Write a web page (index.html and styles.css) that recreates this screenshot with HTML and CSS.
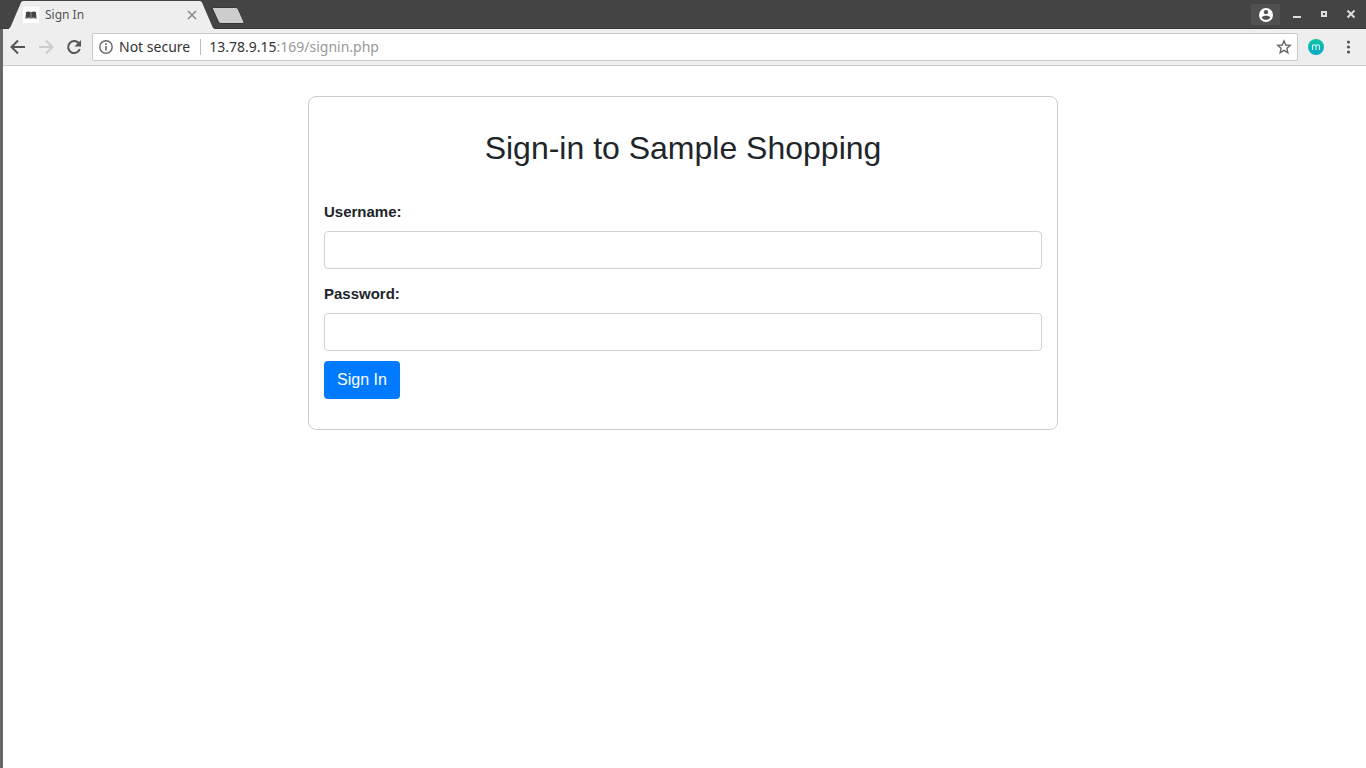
FILE: index.html
```html
<!DOCTYPE html>
<html lang="en">
<head>
<meta charset="utf-8">
<title>Sign In</title>
<link rel="stylesheet" href="styles.css">
</head>
<body>
<div class="browser">
  <header class="titlebar">
    <div class="tab">
      <svg class="tab-shape" viewBox="0 0 206 28" aria-hidden="true"><path d="M0 28V27.200Q1 27 1.500 26L12 1.500Q12.700 0 14 0H191Q192.300 0 193 1.500L203.500 26Q204 27.500 206 28Z" fill="#eeeeee"/></svg>
      <svg class="favicon" viewBox="0 0 16 16" aria-hidden="true"><rect width="16" height="16" fill="#fff"/><path d="M3 5Q5.500 4 7.800 5V11Q5.500 10.300 2.500 11.200ZM8.200 5Q10.500 4 13 5L13.500 11.200Q10.500 10.300 8.200 11Z" fill="#444"/><path d="M2 11.500Q5.500 10.800 8 11.500Q10.500 10.800 14 11.500" fill="none" stroke="#aaa"/></svg>
      <span class="tab-title">Sign In</span>
      <button class="icon-button tab-close" aria-label="Close tab"><svg width="10" height="10" viewBox="0 0 10 10"><path d="M1 1L9 9M9 1L1 9" stroke="#8c8c8c" stroke-width="1.600"/></svg></button>
    </div>
    <button class="icon-button new-tab" aria-label="New tab"><svg width="34" height="18" viewBox="0 0 34 18"><path d="M2.500 1.500H24.500Q26.500 1.500 27.200 3L33 16Q33 17.500 32 17.500H10Q8.300 17.500 7.500 16L1.500 3Q1 1.500 2.500 1.500Z" fill="#cdcdcd" stroke="#363636"/></svg></button>
    <div class="window-controls">
      <button class="icon-button profile" aria-label="Profile"><svg width="14" height="14" viewBox="0 0 14 14"><circle cx="7" cy="7" r="7" fill="#fff"/><circle cx="7" cy="4.200" r="2.100" fill="#505050"/><path d="M2.700 9.400C3.500 7.300 10.500 7.300 11.300 9.400C9.500 12.500 4.500 12.500 2.700 9.400Z" fill="#505050"/></svg></button>
      <button class="icon-button control" aria-label="Minimize"><svg width="10" height="10" viewBox="0 0 10 10"><path d="M1 6H9V8H1Z" fill="#ddd"/></svg></button>
      <button class="icon-button control" aria-label="Restore"><svg width="10" height="10" viewBox="0 0 10 10"><path d="M3 2H7V6H3Z" fill="none" stroke="#ddd" stroke-width="2"/></svg></button>
      <button class="icon-button control" aria-label="Close window"><svg width="10" height="10" viewBox="0 0 10 10"><path d="M1.500 .5L8.500 7.500M8.500 .5L1.500 7.500" stroke="#ddd" stroke-width="2"/></svg></button>
    </div>
  </header>
  <div class="window-body">
    <nav class="toolbar" aria-label="Navigation">
      <button class="icon-button" aria-label="Back"><svg width="16" height="16" viewBox="0 0 16 16"><path d="M15 8H2M8 1.500L1.500 8L8 14.500" fill="none" stroke="#555" stroke-width="2"/></svg></button>
      <button class="icon-button" aria-label="Forward" disabled><svg width="16" height="16" viewBox="0 0 16 16"><path d="M1 8H14M8 1.500L14.500 8L8 14.500" fill="none" stroke="#ccc" stroke-width="2"/></svg></button>
      <button class="icon-button" aria-label="Reload"><svg width="16" height="16" viewBox="0 0 16 16"><path d="M12.600 4A6 6 0 1 0 13.800 10" fill="none" stroke="#555" stroke-width="2"/><path d="M15 1V7.500H8.500Z" fill="#555"/></svg></button>
      <div class="address">
        <svg width="14" height="14" viewBox="0 0 14 14" aria-hidden="true"><circle cx="7" cy="7" r="6.200" fill="none" stroke="#666" stroke-width="1.400"/><path d="M6.200 3.300H7.800V4.900H6.200ZM6.200 6.100H7.800V10.600H6.200Z" fill="#666"/></svg>
        <span class="security">Not secure</span>
        <span class="url">13.78.9.15<span class="path">:169/signin.php</span></span>
        <button class="icon-button bookmark" aria-label="Bookmark this page"><svg width="16" height="16" viewBox="0 0 16 16"><path d="M8 1.900L9.800 6L14.200 6.400L10.900 9.300L11.900 13.700L8 11.400L4.100 13.700L5.100 9.300L1.800 6.400L6.200 6Z" fill="none" stroke="#666" stroke-width="1.400"/></svg></button>
      </div>
      <button class="icon-button extension" aria-label="Extension"><svg width="16" height="16" viewBox="0 0 16 16"><defs><linearGradient id="teal" x1="0" y1="0" x2="0" y2="1"><stop stop-color="#0dc39f"/><stop offset="1" stop-color="#08a8cc"/></linearGradient></defs><circle cx="8" cy="8" r="8" fill="url(#teal)"/><path d="M4.500 11V5.800M4.500 7Q5 5.800 6.300 5.800Q8 5.800 8 7.500V11M8 7.500Q8 5.800 9.800 5.800Q11.500 5.800 11.500 7.500V11" fill="none" stroke="#d9f6f5" stroke-width="1.100"/></svg></button>
      <button class="icon-button" aria-label="Menu"><svg width="16" height="16" viewBox="0 0 16 16"><g fill="#555"><circle cx="8.500" cy="3" r="1.600"/><circle cx="8.500" cy="8" r="1.600"/><circle cx="8.500" cy="13" r="1.600"/></g></svg></button>
    </nav>
    <main class="page">
      <form class="card">
        <h1 class="heading">Sign-in to Sample Shopping</h1>
        <div class="field">
          <label class="label" for="username">Username:</label>
          <input class="input" id="username" type="text">
        </div>
        <div class="field">
          <label class="label" for="password">Password:</label>
          <input class="input" id="password" type="password">
        </div>
        <button class="submit" type="button">Sign In</button>
      </form>
    </main>
  </div>
</div>
</body>
</html>
```

FILE: styles.css
```css
* { box-sizing: border-box; }

body {
  margin: 0;
  background: #fff;
}

.browser {
  display: flex;
  flex-direction: column;
  min-height: 100vh;
  font-family: "Noto Sans", sans-serif;
}

.icon-button {
  display: flex;
  align-items: center;
  justify-content: center;
  flex: none;
  padding: 0;
  border: 0;
  background: none;
}

.titlebar {
  display: flex;
  height: 29px;
  padding: 1px 10px 0 9px;
  background: #444;
  box-shadow: inset 0 -1px #3a3637;
}

.tab {
  position: relative;
  display: flex;
  align-items: center;
  width: 206px;
  padding: 0 18px 0 14px;
}

.tab-shape {
  position: absolute;
  inset: 0;
  width: 100%;
  height: 100%;
}

.favicon {
  position: relative;
  width: 16px;
  height: 16px;
}

.tab-title {
  position: relative;
  flex: 1;
  margin-left: 6px;
  font-size: 12px;
  line-height: 16px;
  color: #555;
}

.tab-close { position: relative; }

.new-tab { margin-left: -4px; }

.window-controls {
  display: flex;
  align-items: center;
  gap: 17px;
  height: 27px;
  margin-left: auto;
}

.profile {
  width: 29px;
  height: 21px;
  margin-right: -5px;
  background: #505050;
  border-radius: 1px;
}

.window-body {
  flex: 1;
  border-left: 3px solid #666;
}

.toolbar {
  display: flex;
  align-items: center;
  gap: 12px;
  height: 37px;
  padding: 0 10px 0 7px;
  background: #eee;
  border-bottom: 1px solid #ccc;
}

.address {
  display: flex;
  align-items: center;
  flex: 1;
  height: 28px;
  margin-left: -2px;
  padding: 0 5px 0 6px;
  background: #fff;
  border: 1px solid #c8c8c8;
  border-radius: 2px;
  font-size: 14px;
  line-height: 16px;
  color: #333;
}

.security {
  margin-left: 6px;
  padding-right: 10px;
  border-right: 1px solid #bbb;
}

.url {
  flex: 1;
  margin-left: 8px;
}

.path { color: #999; }

.extension {
  margin-left: -2px;
  margin-right: 4px;
}

.page {
  padding: 30px 18px 30px 15px;
  font-family: "Liberation Sans", Arial, sans-serif;
  color: #212529;
}

.card {
  max-width: 750px;
  margin: 0 auto;
  padding: 30px 15px;
  border: 1px solid #ccc;
  border-radius: 8px;
}

.heading {
  margin: 0 0 32px;
  font-size: 32px;
  line-height: 42px;
  font-weight: 400;
  text-align: center;
}

.field + .field { margin-top: 14px; }

.label {
  display: block;
  margin-bottom: 8px;
  font-size: 15px;
  line-height: 22px;
  font-weight: 700;
}

.input {
  display: block;
  width: 100%;
  height: 38px;
  padding: 6px 12px;
  border: 1px solid #ced4da;
  border-radius: 4px;
  background: #fff;
  font: inherit;
}

.submit {
  display: block;
  height: 38px;
  margin-top: 10px;
  padding: 0 13px;
  border: 0;
  border-radius: 4px;
  background: #007bff;
  color: #fff;
  font-family: inherit;
  font-size: 16px;
}
```
